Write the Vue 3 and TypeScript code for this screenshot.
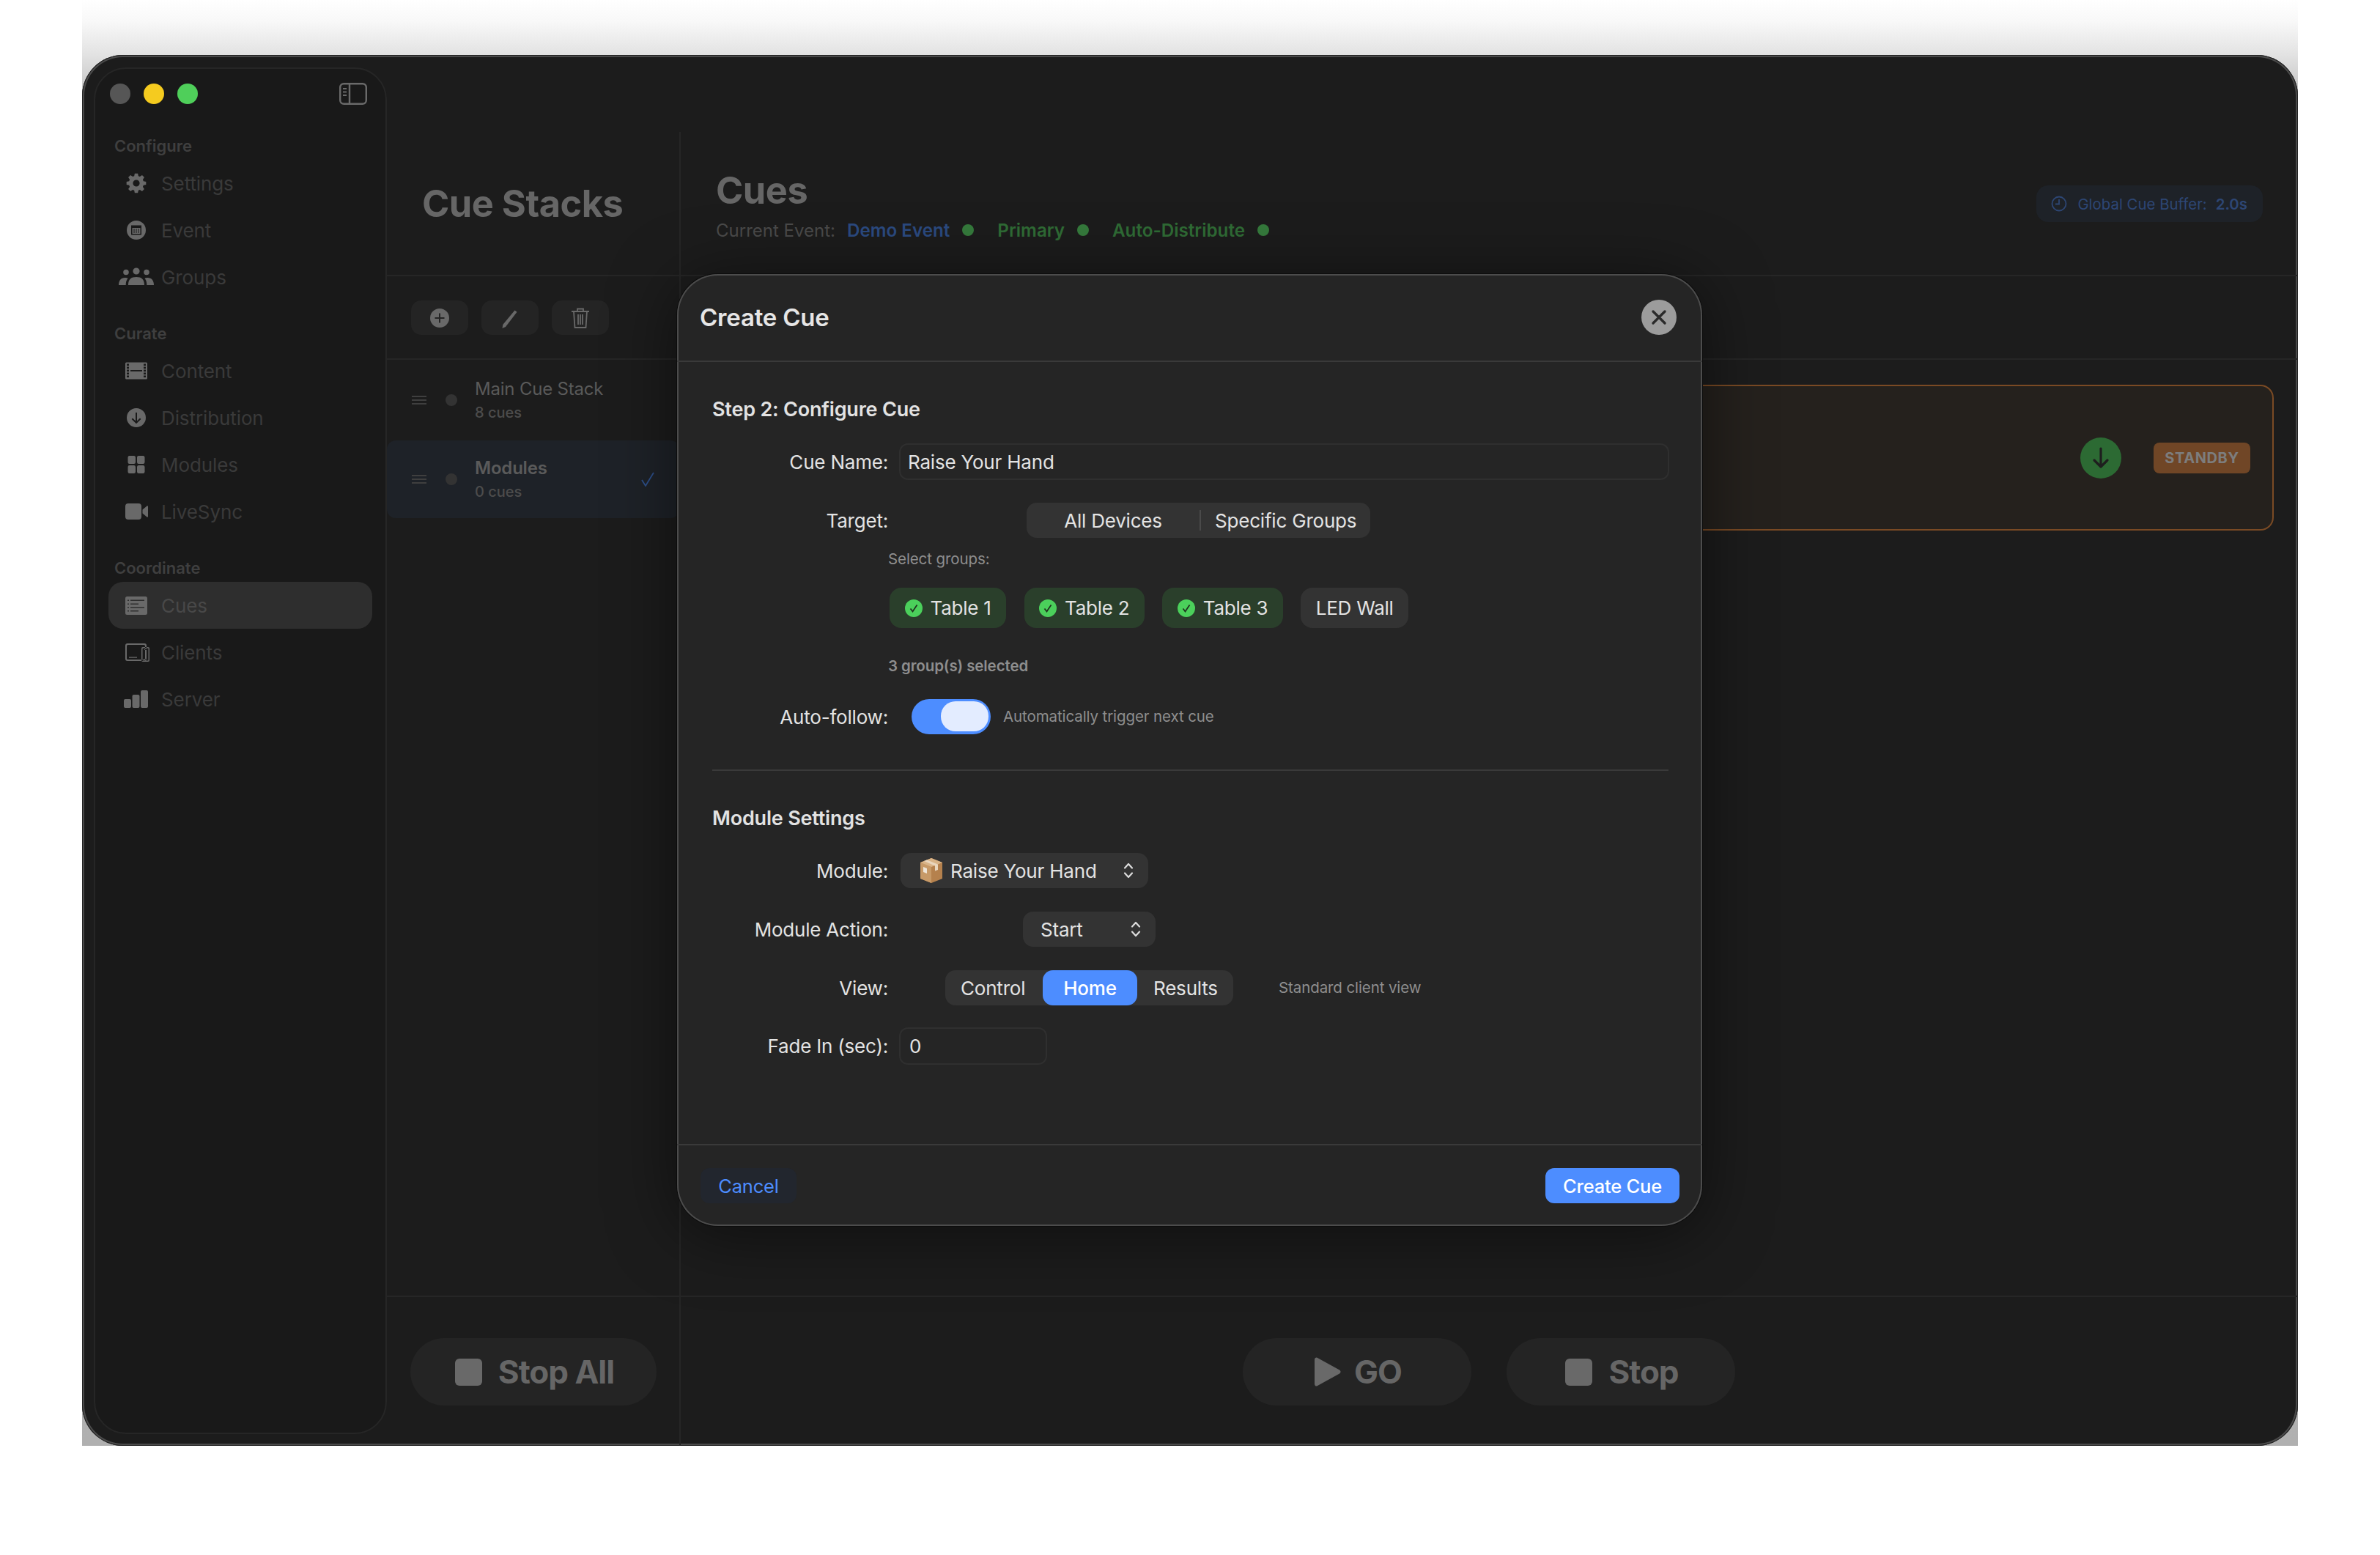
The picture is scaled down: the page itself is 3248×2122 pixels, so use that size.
<script setup lang="ts">
const circle = (cx: number, cy: number, r: number) =>
  `M${cx - r} ${cy}a${r} ${r} 0 1 0 ${2 * r} 0a${r} ${r} 0 1 0 ${-2 * r} 0Z`
const rect = (x: number, y: number, w: number, h: number) => `M${x} ${y}h${w}v${h}h${-w}Z`
const rrect = (x: number, y: number, w: number, h: number, r: number) =>
  `M${x + r} ${y}h${w - 2 * r}a${r} ${r} 0 0 1 ${r} ${r}v${h - 2 * r}a${r} ${r} 0 0 1 ${-r} ${r}h${-(w - 2 * r)}a${r} ${r} 0 0 1 ${-r} ${-r}v${-(h - 2 * r)}a${r} ${r} 0 0 1 ${r} ${-r}Z`

function gear(cx: number, cy: number, ro: number, ri: number, hole: number, n: number): string {
  const pts: string[] = []
  const step = (Math.PI * 2) / n
  for (let i = 0; i < n; i++) {
    const a = i * step - Math.PI / 2
    const list: [number, number][] = [
      [ri, a - step * 0.36],
      [ro, a - step * 0.2],
      [ro, a + step * 0.2],
      [ri, a + step * 0.36],
    ]
    for (const [r, t] of list) pts.push(`${(cx + r * Math.cos(t)).toFixed(2)} ${(cy + r * Math.sin(t)).toFixed(2)}`)
  }
  return `M${pts.join('L')}Z${circle(cx, cy, hole)}`
}

const icons: Record<string, string> = {
  settings: gear(24, 14, 13.5, 10.2, 4.6, 8),
  event:
    circle(24, 14, 13) + rect(17, 7.5, 14, 13) + rect(18.5, 11, 11, 8) + rect(20.5, 12, 1, 6) + rect(23.5, 12, 1, 6) + rect(26.5, 12, 1, 6),
  groups:
    circle(24, 6, 4.6) + circle(10, 7.5, 3.8) + circle(38, 7.5, 3.8) +
    'M13 25c0-8 4-11 11-11s11 3 11 11Z' +
    'M0 25c0-6 3-10 8.500-10c1.500 0 3 .3 4 .9c-2 2.200-2.800 5-2.800 9.100Z' +
    'M48 25c0-6-3-10-8.500-10c-1.500 0-3 .3-4 .9c2 2.200 2.800 5 2.800 9.100Z',
  content:
    rrect(9, 2.5, 30, 23, 1.5) +
    [4.5, 8.5, 12.5, 16.500, 20.500].map((y) => rect(11, y, 3, 2.5) + rect(34, y, 3, 2.5)).join('') +
    rect(16, 13, 16, 1.8),
  distribution: circle(24, 14, 13) + 'M23 7h2v11.500l4-4 1.400 1.400-6.400 6.400-6.400-6.400 1.400-1.400 4 4Z',
  modules:
    rrect(12.5, 2, 10.5, 11, 2.2) + rrect(25, 2, 10.500, 11, 2.2) + rrect(12.5, 15, 10.500, 11, 2.2) + rrect(25, 15, 10.500, 11, 2.2),
  livesync: rrect(9, 3, 22, 22, 4) + 'M32.500 11.500l6-5c.8-.6 1.500-.2 1.500.8v13.400c0 1-.7 1.400-1.500.8l-6-5Z',
  cues:
    rrect(9, 2, 30, 25, 2.5) +
    [6.5, 11.5, 16.5, 21].map((y, i) => rect(12, y, 2, 1.6) + rect(16, y, i % 2 ? 11 : 19, 1.6)).join(''),
  clients:
    rrect(9, 2, 29, 24, 3) + rrect(11, 4, 25, 20, 1.5) + rrect(31, 7, 11, 20, 2) + rrect(32.500, 8.500, 8, 17, 1) + rect(14, 20.5, 11, 1.2) + rect(34.500, 23, 4, 1) + rect(35, 10, 3, 1),
  server: rrect(7, 14, 10, 12, 2) + rrect(18.500, 8, 10, 18, 2) + rrect(30, 2, 10, 24, 2),
}

interface NavItem { label: string; icon: string; active?: boolean }
interface NavSection { title: string; items: NavItem[] }

const sections: NavSection[] = [
  {
    title: 'Configure',
    items: [
      { label: 'Settings', icon: 'settings' },
      { label: 'Event', icon: 'event' },
      { label: 'Groups', icon: 'groups' },
    ],
  },
  {
    title: 'Curate',
    items: [
      { label: 'Content', icon: 'content' },
      { label: 'Distribution', icon: 'distribution' },
      { label: 'Modules', icon: 'modules' },
      { label: 'LiveSync', icon: 'livesync' },
    ],
  },
  {
    title: 'Coordinate',
    items: [
      { label: 'Cues', icon: 'cues', active: true },
      { label: 'Clients', icon: 'clients' },
      { label: 'Server', icon: 'server' },
    ],
  },
]

const stacks = [
  { name: 'Main Cue Stack', count: '8 cues', selected: false },
  { name: 'Modules', count: '0 cues', selected: true },
]

const groups = [
  { name: 'Table 1', on: true },
  { name: 'Table 2', on: true },
  { name: 'Table 3', on: true },
  { name: 'LED Wall', on: false },
]
</script>

<template>
  <div class="page">
    <div class="shade">
      <div class="window">
        <aside class="sidebar">
          <div class="titlebar">
            <span class="light gray"></span>
            <span class="light yellow"></span>
            <span class="light green"></span>
            <svg class="toggle" width="38" height="30" viewBox="0 0 38 30" fill="none" stroke="#6a6a6a" stroke-width="2.4">
              <rect x="1.200" y="1.200" width="35.600" height="27.600" rx="5" />
              <path d="M14 1.200v27.600" />
              <path d="M5 8h5M5 12.500h5M5 17h5" stroke-width="2" />
            </svg>
          </div>
          <nav class="nav">
            <section v-for="s in sections" :key="s.title" class="nav-section">
              <h3 class="nav-title">{{ s.title }}</h3>
              <a v-for="it in s.items" :key="it.label" class="nav-item" :class="{ active: it.active }">
                <svg width="48" height="28" viewBox="0 0 48 28" fill="#696969" fill-rule="evenodd">
                  <path :d="icons[it.icon]" />
                </svg>
                <span>{{ it.label }}</span>
              </a>
            </section>
          </nav>
        </aside>

        <div class="main">
          <div class="grid">
            <div class="col stacks">
              <header class="head stacks-head">
                <h1 class="big">Cue Stacks</h1>
              </header>
              <div class="toolbar">
                <button class="tool">
                  <svg width="28" height="28" viewBox="0 0 28 28" fill="#696969" fill-rule="evenodd">
                    <path d="M14 1a13 13 0 1 0 0 26a13 13 0 1 0 0-26ZM13 7.500h2V13h5.500v2H15v5.500h-2V15H7.500v-2H13Z" />
                  </svg>
                </button>
                <button class="tool">
                  <svg width="28" height="28" viewBox="0 0 28 28" fill="#696969">
                    <path d="M20.500 3.500l3 2.200L8 26l-4.500 2 .8-5Z" />
                  </svg>
                </button>
                <button class="tool">
                  <svg width="28" height="30" viewBox="0 0 28 30" fill="none" stroke="#696969" stroke-width="1.800">
                    <path d="M2 6h24M10 6V2.500h8V6M5 6l1.500 22h15L23 6M11 10v14M14 10v14M17 10v14" />
                  </svg>
                </button>
              </div>
              <div class="stack-list">
                <div v-for="st in stacks" :key="st.name" class="stack" :class="{ sel: st.selected }">
                  <svg class="handle" width="20" height="14" viewBox="0 0 20 14" stroke="#3f3f3f" stroke-width="2">
                    <path d="M0 2h20M0 7h20M0 12h20" />
                  </svg>
                  <span class="stack-dot"></span>
                  <div class="stack-text">
                    <div class="stack-name">{{ st.name }}</div>
                    <div class="stack-count">{{ st.count }}</div>
                  </div>
                  <svg v-if="st.selected" class="stack-check" width="18" height="20" viewBox="0 0 18 20" fill="none" stroke="#2d4f8a" stroke-width="1.800">
                    <path d="M1 11l5 8L17 1" />
                  </svg>
                </div>
              </div>
              <footer class="foot stacks-foot">
                <button class="pill stop-all"><span class="sq"></span>Stop All</button>
              </footer>
            </div>

            <div class="col cues">
              <header class="head cues-head">
                <div class="cues-title">
                  <h1 class="big">Cues</h1>
                  <div class="meta">
                    <span class="m-label">Current Event:</span>
                    <span class="m-blue">Demo Event</span><i class="dot"></i>
                    <span class="m-green">Primary</span><i class="dot"></i>
                    <span class="m-green">Auto-Distribute</span><i class="dot"></i>
                  </div>
                </div>
                <div class="buffer">
                  <svg width="22" height="22" viewBox="0 0 22 22" fill="none" stroke="#2d4674" stroke-width="1.800">
                    <circle cx="11" cy="11" r="9.500" />
                    <path d="M11 5v6.500H6" />
                  </svg>
                  <span>Global Cue Buffer:</span>
                  <b>2.0s</b>
                </div>
              </header>
              <div class="toolbar cues-bar"></div>
              <div class="cue-list">
                <div class="cue-card">
                  <span class="down">
                    <svg width="28" height="32" viewBox="0 0 28 32" fill="none" stroke="#1e1e1e" stroke-width="3.200" stroke-linecap="round" stroke-linejoin="round">
                      <path d="M14 3v25M5 19l9 9 9-9" />
                    </svg>
                  </span>
                  <span class="standby">STANDBY</span>
                </div>
              </div>
              <footer class="foot cues-foot">
                <button class="pill go">
                  <svg width="36" height="40" viewBox="0 0 36 40" fill="#696969">
                    <path d="M0 3.500C0 .8 2.600-.6 4.500 1.200L34 17.500c2 1.400 2 3.600 0 5L4.500 38.800C2.600 40.600 0 39.200 0 36.500Z" />
                  </svg>GO
                </button>
                <button class="pill"><span class="sq"></span>Stop</button>
              </footer>
            </div>
          </div>
        </div>

        <div class="modal">
          <header class="modal-head">
            <h2>Create Cue</h2>
            <button class="close">
              <svg width="22" height="22" viewBox="0 0 22 22" stroke="#2a2a2a" stroke-width="3.400" stroke-linecap="round">
                <path d="M3 3l16 16M19 3L3 19" />
              </svg>
            </button>
          </header>

          <div class="modal-body">
            <h4 class="sect first">Step 2: Configure Cue</h4>

            <div class="row r-name">
              <label>Cue Name:</label>
              <div class="field wide">Raise Your Hand</div>
            </div>

            <div class="row r-target">
              <label>Target:</label>
              <div class="seg target">
                <span class="seg-a">All Devices</span>
                <i class="seg-sep"></i>
                <span class="seg-b">Specific Groups</span>
              </div>
            </div>

            <div class="hint select">Select groups:</div>

            <div class="chips">
              <div v-for="g in groups" :key="g.name" class="chip" :class="{ on: g.on }">
                <svg v-if="g.on" width="24" height="24" viewBox="0 0 24 24">
                  <circle cx="12" cy="12" r="12" fill="#4bd05b" />
                  <path d="M7.500 12.500l3 4 6-9" fill="none" stroke="#20331f" stroke-width="1.800" />
                </svg>
                <span>{{ g.name }}</span>
              </div>
            </div>

            <div class="hint count">3 group(s) selected</div>

            <div class="row r-auto">
              <label>Auto-follow:</label>
              <div class="switch"><i class="knob"></i></div>
              <span class="hint inline">Automatically trigger next cue</span>
            </div>

            <hr class="divider" />

            <h4 class="sect">Module Settings</h4>

            <div class="row r-module">
              <label>Module:</label>
              <div class="select-box module">
                <svg class="box" width="34" height="36" viewBox="0 0 34 36">
                  <path d="M17 1L32 7v22l-15 6L2 29V7Z" fill="#b5814d" />
                  <path d="M17 13v22L2 29V7Z" fill="#c79a68" />
                  <path d="M17 13L32 7 17 1 2 7Z" fill="#d9b488" />
                  <path d="M7 5l15 6.500v7l4-1.600V9.500L11 3.400Z" fill="#e9d6bd" />
                  <path d="M6 13l5 2v7l-5-2Z" fill="#efe6d8" />
                </svg>
                <span>Raise Your Hand</span>
                <svg class="chev" width="14" height="24" viewBox="0 0 14 24" fill="none" stroke="#dcdcdc" stroke-width="2.200" stroke-linecap="round" stroke-linejoin="round">
                  <path d="M2 8.500L7 3l5 5.500M2 15.500L7 21l5-5.500" />
                </svg>
              </div>
            </div>

            <div class="row r-action">
              <label>Module Action:</label>
              <div class="select-box action">
                <span>Start</span>
                <svg class="chev" width="14" height="24" viewBox="0 0 14 24" fill="none" stroke="#dcdcdc" stroke-width="2.200" stroke-linecap="round" stroke-linejoin="round">
                  <path d="M2 8.500L7 3l5 5.500M2 15.500L7 21l5-5.500" />
                </svg>
              </div>
            </div>

            <div class="row r-view">
              <label>View:</label>
              <div class="seg view">
                <span class="v-c">Control</span>
                <span class="v-h">Home</span>
                <span class="v-r">Results</span>
              </div>
              <span class="hint inline std">Standard client view</span>
            </div>

            <div class="row r-fade">
              <label>Fade In (sec):</label>
              <div class="field small">0</div>
            </div>
          </div>

          <footer class="modal-foot">
            <button class="btn cancel">Cancel</button>
            <button class="btn create">Create Cue</button>
          </footer>
        </div>
      </div>
    </div>
  </div>
</template>

<style>
html, body { margin: 0; background: #fff; }
</style>

<style scoped>
* { box-sizing: border-box; }
h1, h2, h3, h4, hr { margin: 0; }
button { font: inherit; border: 0; color: inherit; padding: 0; }
.page {
  width: 3248px;
  height: 2122px;
  background: #fff;
  padding-left: 112px;
  font-family: Inter, "Liberation Sans", sans-serif;
  overflow: hidden;
}
.shade {
  width: 3024px;
  height: 1973px;
  padding-top: 75px;
  background: linear-gradient(#fff 0, #f8f8f8 30px, #e2e2e2 75px, #c8c8c8 120px, #b0b0b0 100%);
}
.window {
  position: relative;
  display: flex;
  width: 3024px;
  height: 1898px;
  background: #1c1c1c;
  border-radius: 56px;
  box-shadow: inset 0 0 0 1px #222, inset 0 0 0 3px #4a4a4a;
}
.sidebar {
  width: 400px;
  margin: 17px 0 16px 16px;
  flex: none;
  background: #191919;
  border: 2px solid #262626;
  border-radius: 44px;
}
.titlebar {
  display: flex;
  align-items: center;
  height: 68px;
  padding-left: 20px;
}
.light { width: 28px; height: 28px; border-radius: 50%; margin-right: 18px; }
.gray { background: #565656; }
.yellow { background: #f5cb1f; }
.green { background: #4fcf5a; }
.toggle { margin-left: 175px; }
.nav { padding-top: 22px; }
.nav-section { margin-bottom: 30px; }
.nav-title {
  height: 30px;
  margin: 0 0 4px 26px;
  font-size: 22px;
  line-height: 30px;
  font-weight: 600;
  color: #3f3f3f;
}
.nav-item {
  display: flex;
  align-items: center;
  gap: 10px;
  width: 360px;
  height: 64px;
  margin-left: 18px;
  padding-left: 14px;
  border-radius: 20px;
  font-size: 26px;
  color: #3a3a3a;
  letter-spacing: -.1px;
}
.nav-item.active { background: #2e2e2e; color: #484848; }
.main { flex: 1; padding-top: 105px; display: flex; flex-direction: column; min-width: 0; }
.grid { flex: 1; display: flex; min-height: 0; }
.col { display: flex; flex-direction: column; }
.stacks { width: 401px; flex: none; border-right: 2px solid #262626; }
.cues { flex: 1; min-width: 0; }
.head { height: 197px; border-bottom: 2px solid #262626; display: flex; }
.big { font-size: 50.500px; font-weight: 700; color: #666; letter-spacing: -.5px; line-height: 60px; }
.stacks-head { padding: 68px 0 0 48px; }
.cues-head { padding: 50px 48px 0 48px; justify-content: space-between; }
.meta { display: flex; align-items: center; height: 30px; margin-top: 9px; font-size: 24px; white-space: nowrap; }
.m-label { color: #4a4a4a; margin-right: 16px; }
.m-blue { color: #2b4a80; font-weight: 600; font-size: 24.200px; }
.m-green { color: #2f6b35; font-weight: 600; font-size: 24.200px; }
.dot { width: 16px; height: 16px; border-radius: 50%; background: #357a3c; margin: 0 32px 0 17px; }
.buffer {
  display: flex;
  align-items: center;
  gap: 14px;
  height: 50px;
  margin-top: 23px;
  padding: 0 21px 0 20px;
  background: #1e2228;
  border-radius: 16px;
  font-size: 20.400px;
  color: #2d4674;
  white-space: nowrap;
}
.buffer b { font-weight: 600; margin-left: -2px; }
.toolbar { height: 114px; flex: none; border-bottom: 2px solid #262626; display: flex; gap: 18px; padding: 33px 0 0 33px; }
.tool { width: 78px; height: 47px; background: #242424; border-radius: 14px; display: flex; align-items: center; justify-content: center; }
.stack-list { flex: 1; min-height: 0; padding-top: 2px; }
.stack { display: flex; align-items: center; height: 106px; padding-left: 34px; }
.stack + .stack { margin-top: 2px; }
.stack.sel { background: #1e2228; border-radius: 12px; font-weight: 600; }
.handle { flex: none; }
.stack-dot { width: 16px; height: 16px; border-radius: 50%; background: #333; margin: 0 24px 0 26px; flex: none; }
.stack-name { font-size: 24px; color: #5a5a5a; line-height: 32px; letter-spacing: -.2px; }
.stack-count { font-size: 20px; color: #4c4c4c; line-height: 28px; margin-top: 2px; font-weight: 500; }
.stack-check { margin-left: auto; margin-right: 34px; }
.foot { height: 205px; flex: none; border-top: 2px solid #262626; display: flex; padding-top: 56px; }
.stacks-foot { padding-left: 32px; }
.cues-foot { padding-left: 767px; gap: 48px; }
.pill {
  width: 312px;
  height: 92px;
  padding-left: 3px;
  background: #242424;
  border-radius: 46px;
  display: flex;
  align-items: center;
  justify-content: center;
  gap: 22px;
  font-size: 44px;
  font-weight: 700;
  color: #666;
  letter-spacing: -1px;
}
.go { gap: 18px; }
.stop-all { width: 336px; }
.sq { width: 37px; height: 37px; background: #696969; border-radius: 6px; flex: none; }
.cue-list { flex: 1; padding-top: 34px; min-height: 0; }
.cue-card {
  margin: 0 33px 0 0;
  height: 199px;
  background: #25211d;
  border: 2px solid #7a4a24;
  border-radius: 18px;
  display: flex;
  align-items: center;
  justify-content: flex-end;
  padding-right: 30px;
}
.down { width: 56px; height: 56px; border-radius: 50%; background: #2c6a33; display: flex; align-items: center; justify-content: center; margin-right: 44px; }
.standby { width: 132px; height: 42px; background: #704626; border-radius: 8px; display: flex; align-items: center; justify-content: center; font-size: 20px; font-weight: 700; color: #7d7d7d; letter-spacing: .6px; }

.modal {
  position: absolute;
  left: 812px;
  top: 299px;
  width: 1399px;
  height: 1299px;
  background: #252525;
  border-radius: 56px;
  box-shadow: inset 0 0 0 2px #4c4c4c, 0 0 0 1px #0c0c0c, 0 10px 90px rgba(0, 0, 0, .5);
  display: flex;
  flex-direction: column;
  color: #e3e3e3;
  font-size: 26px;
}
.modal-head { height: 120px; flex: none; border-bottom: 2px solid #3a3a3a; display: flex; align-items: center; justify-content: space-between; padding: 0 35px 0 31px; }
.modal-head h2 { font-size: 33px; font-weight: 600; color: #e6e6e6; letter-spacing: -.2px; }
.close { width: 48px; height: 48px; border-radius: 50%; background: #9c9c9c; display: flex; align-items: center; justify-content: center; }
.modal-body { flex: 1; padding: 0 45px 0 48px; min-height: 0; }
.sect { font-size: 27px; line-height: 32px; font-weight: 600; color: #e2e2e2; letter-spacing: -.2px; }
.sect.first { margin-top: 49px; }
.row { display: flex; align-items: center; }
.row label { width: 240px; flex: none; text-align: right; letter-spacing: -.2px; }
.r-name { margin-top: 30px; height: 50px; }
.r-target { margin-top: 31px; height: 48px; }
.r-auto { margin-top: 33px; height: 48px; }
.r-module { margin-top: 31px; height: 48px; }
.r-action { margin-top: 32px; height: 48px; }
.r-view { margin-top: 32px; height: 48px; }
.r-fade { margin-top: 30px; height: 51px; }
.field { height: 100%; border: 2px solid #2f2f2f; border-radius: 12px; display: flex; align-items: center; padding-left: 10px; margin-left: 15px; letter-spacing: -.2px; }
.wide { width: 1051px; }
.small { width: 202px; padding-left: 12px; }
.seg { background: #333; border-radius: 14px; height: 48px; display: flex; align-items: center; letter-spacing: -.2px; }
.target { width: 469px; margin-left: 189px; position: relative; }
.seg-a { width: 236px; text-align: center; }
.seg-sep { width: 2px; height: 28px; background: #4a4a4a; flex: none; }
.seg-b { padding-left: 19px; white-space: nowrap; }
.hint { font-size: 20.500px; line-height: 24px; color: #8e8e8e; letter-spacing: -.1px; }
.select { margin: 17px 0 0 240px; }
.chips { display: flex; margin: 27px 0 0 242px; gap: 24.500px; }
.chip { height: 55px; padding: 0 20.500px; background: #333; border-radius: 16px; display: flex; align-items: center; gap: 11px; letter-spacing: -.25px; }
.chip.on { background: #2a3f2b; }
.count { margin: 40px 0 0 240px; font-weight: 600; }
.switch { width: 108px; height: 48px; background: #4d8dff; border-radius: 24px; margin-left: 34px; padding: 3px 3px 0 40px; flex: none; }
.r-auto .switch { margin-left: 32px; }
.knob { display: block; width: 65px; height: 41px; background: #e3ecff; border-radius: 20px; }
.inline { margin-left: 17px; }
.divider { border: 0; height: 2px; background: #3a3a3a; margin: 48px 0 0 0; width: 1305px; }
.divider + .sect { margin-top: 49px; }
.select-box { background: #333; border-radius: 14px; height: 48px; display: flex; align-items: center; letter-spacing: -.2px; position: relative; }
.module { width: 338px; margin-left: 17px; padding-left: 25px; }
.module span { margin-left: 9px; }
.action { width: 181px; margin-left: 184px; padding-left: 24px; }
.chev { position: absolute; right: 20px; top: 12px; }
.view { width: 393px; margin-left: 78px; position: relative; }
.v-c { width: 133px; padding-left: 21px; }
.v-h { width: 129px; height: 48px; background: #4d8dff; border-radius: 14px; color: #fff; display: flex; align-items: center; justify-content: center; font-weight: 500; }
.v-r { padding-left: 22px; }
.std { margin-left: 62px; }
.modal-foot { height: 112px; flex: none; border-top: 2px solid #3a3a3a; display: flex; justify-content: space-between; padding: 31px 31px 0 32px; }
.btn { height: 48px; border-radius: 12px; font-size: 25.500px; letter-spacing: -.2px; }
.cancel { width: 131px; background: #22262e; color: #4d8dff; }
.create { width: 183px; background: #4d8dff; color: #fff; font-weight: 500; }
</style>
